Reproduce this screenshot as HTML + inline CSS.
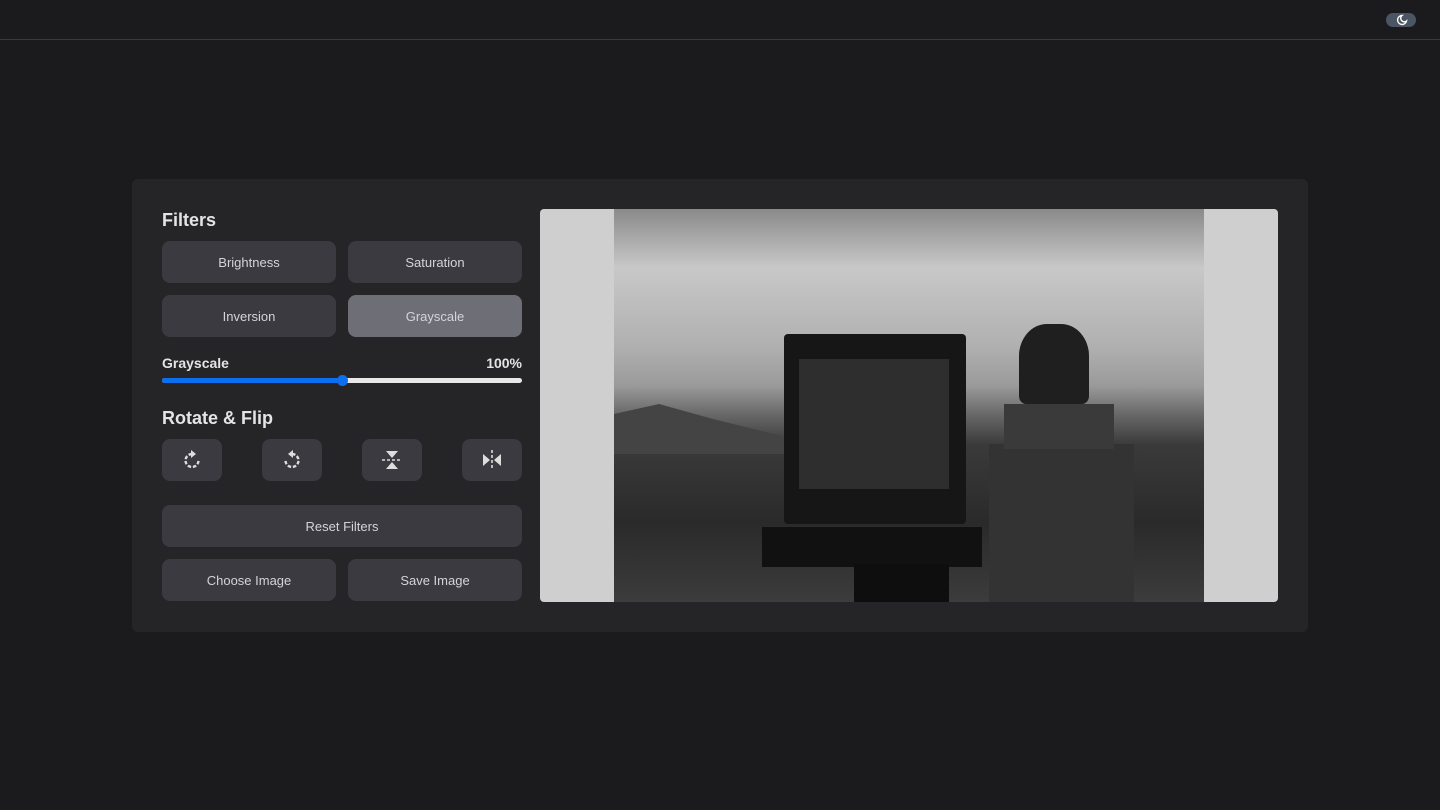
<!DOCTYPE html>
<html><head><style>
*{box-sizing:border-box;margin:0;padding:0}
body{width:1440px;height:810px;background:#1b1b1e;font-family:"Liberation Sans",sans-serif;position:relative;overflow:hidden;color:#e4e4e7}
.top{position:absolute;left:0;top:0;width:1440px;height:40px;border-bottom:1px solid #3a3a3e}
.tog{position:absolute;left:1386px;top:13px;width:30px;height:14px;border-radius:7px;background:#4b5563}
.panel{position:absolute;left:132px;top:179px;width:1176px;height:453px;background:#252528;border-radius:6px}
h2{position:absolute;font-size:18px;font-weight:bold;color:#e4e4e7}
.b{position:absolute;background:#3a3a40;border-radius:8px;color:#d4d4d8;font-size:13px;display:flex;align-items:center;justify-content:center}
.act{background:#6e6e76}
.img{position:absolute;left:540px;top:209px;width:738px;height:393px;background:#cfcfcf;border-radius:4px;overflow:hidden}
.photo{position:absolute;left:74px;top:0;width:590px;height:393px;background:linear-gradient(180deg,#8a8a8a 0%,#c8c8c8 15%,#b0b0b0 35%,#9a9a9a 45%,#6a6a6a 52%,#3a3a3a 60%,#2a2a2a 80%,#3c3c3c 100%)}
</style></head><body>
<div class="top"></div>
<div class="tog"><svg style="position:absolute;left:10px;top:1px" width="12" height="12" viewBox="0 0 12 12"><path d="M6 1.5A4.5 4.5 0 1 0 10.5 7 3.5 3.5 0 0 1 6 1.5z" fill="none" stroke="#fff" stroke-width="1.4"/></svg></div>
<div class="panel"></div>
<h2 style="left:162px;top:210px">Filters</h2>
<div class="b" style="left:162px;top:241px;width:174px;height:42px">Brightness</div>
<div class="b" style="left:348px;top:241px;width:174px;height:42px">Saturation</div>
<div class="b" style="left:162px;top:295px;width:174px;height:42px">Inversion</div>
<div class="b act" style="left:348px;top:295px;width:174px;height:42px">Grayscale</div>
<div style="position:absolute;left:162px;top:355px;font-size:14px;font-weight:bold">Grayscale</div>
<div style="position:absolute;right:918px;top:355px;font-size:14px;font-weight:bold">100%</div>
<div style="position:absolute;left:162px;top:378px;width:360px;height:5px;border-radius:3px;background:#e8e8e8"></div>
<div style="position:absolute;left:162px;top:378px;width:180px;height:5px;border-radius:3px;background:#0b6ff0"></div>
<div style="position:absolute;left:337px;top:375px;width:11px;height:11px;border-radius:50%;background:#0b6ff0"></div>
<h2 style="left:162px;top:408px">Rotate &amp; Flip</h2>
<div class="b" style="left:162px;top:439px;width:60px;height:42px"><svg width="24" height="24" viewBox="0 0 24 24"><path d="M12 6A6.5 6.5 0 1 0 18.5 12.5" fill="none" stroke="#ddd" stroke-width="2.4" stroke-dasharray="3.5 1.8"/><path d="M11 2l5 4-5 4z" fill="#ddd"/></svg></div>
<div class="b" style="left:262px;top:439px;width:60px;height:42px"><svg width="24" height="24" viewBox="0 0 24 24"><path d="M12 6A6.5 6.5 0 1 1 5.5 12.5" fill="none" stroke="#ddd" stroke-width="2.4" stroke-dasharray="3.5 1.8"/><path d="M13 2l-5 4 5 4z" fill="#ddd"/></svg></div>
<div class="b" style="left:362px;top:439px;width:60px;height:42px"><svg width="24" height="24" viewBox="0 0 24 24"><path d="M6 3h12l-6 7z M6 21h12l-6-7z" fill="#ddd"/><path d="M2 12h20" stroke="#ddd" stroke-width="1.6" stroke-dasharray="3 2"/></svg></div>
<div class="b" style="left:462px;top:439px;width:60px;height:42px"><svg width="24" height="24" viewBox="0 0 24 24"><path d="M3 6v12l7-6z M21 6v12l-7-6z" fill="#ddd"/><path d="M12 2v20" stroke="#ddd" stroke-width="1.6" stroke-dasharray="3 2"/></svg></div>
<div class="b" style="left:162px;top:505px;width:360px;height:42px">Reset Filters</div>
<div class="b" style="left:162px;top:559px;width:174px;height:42px">Choose Image</div>
<div class="b" style="left:348px;top:559px;width:174px;height:42px">Save Image</div>
<div class="img"><div class="photo">
<div style="position:absolute;left:0;top:195px;width:180px;height:50px;background:#444;clip-path:polygon(0 20%,25% 0,55% 30%,100% 70%,100% 100%,0 100%)"></div>
<div style="position:absolute;left:170px;top:125px;width:182px;height:190px;background:#161616;border-radius:4px"></div>
<div style="position:absolute;left:185px;top:150px;width:150px;height:130px;background:#2e2e2e"></div>
<div style="position:absolute;left:148px;top:318px;width:220px;height:40px;background:#111"></div>
<div style="position:absolute;left:240px;top:355px;width:95px;height:40px;background:#0e0e0e"></div>
<div style="position:absolute;left:375px;top:235px;width:145px;height:158px;background:#333"></div>
<div style="position:absolute;left:390px;top:195px;width:110px;height:45px;background:#3a3a3a"></div>
<div style="position:absolute;left:405px;top:115px;width:70px;height:80px;background:#1f1f1f;border-radius:40% 40% 10% 10%"></div>
</div></div>
</body></html>
